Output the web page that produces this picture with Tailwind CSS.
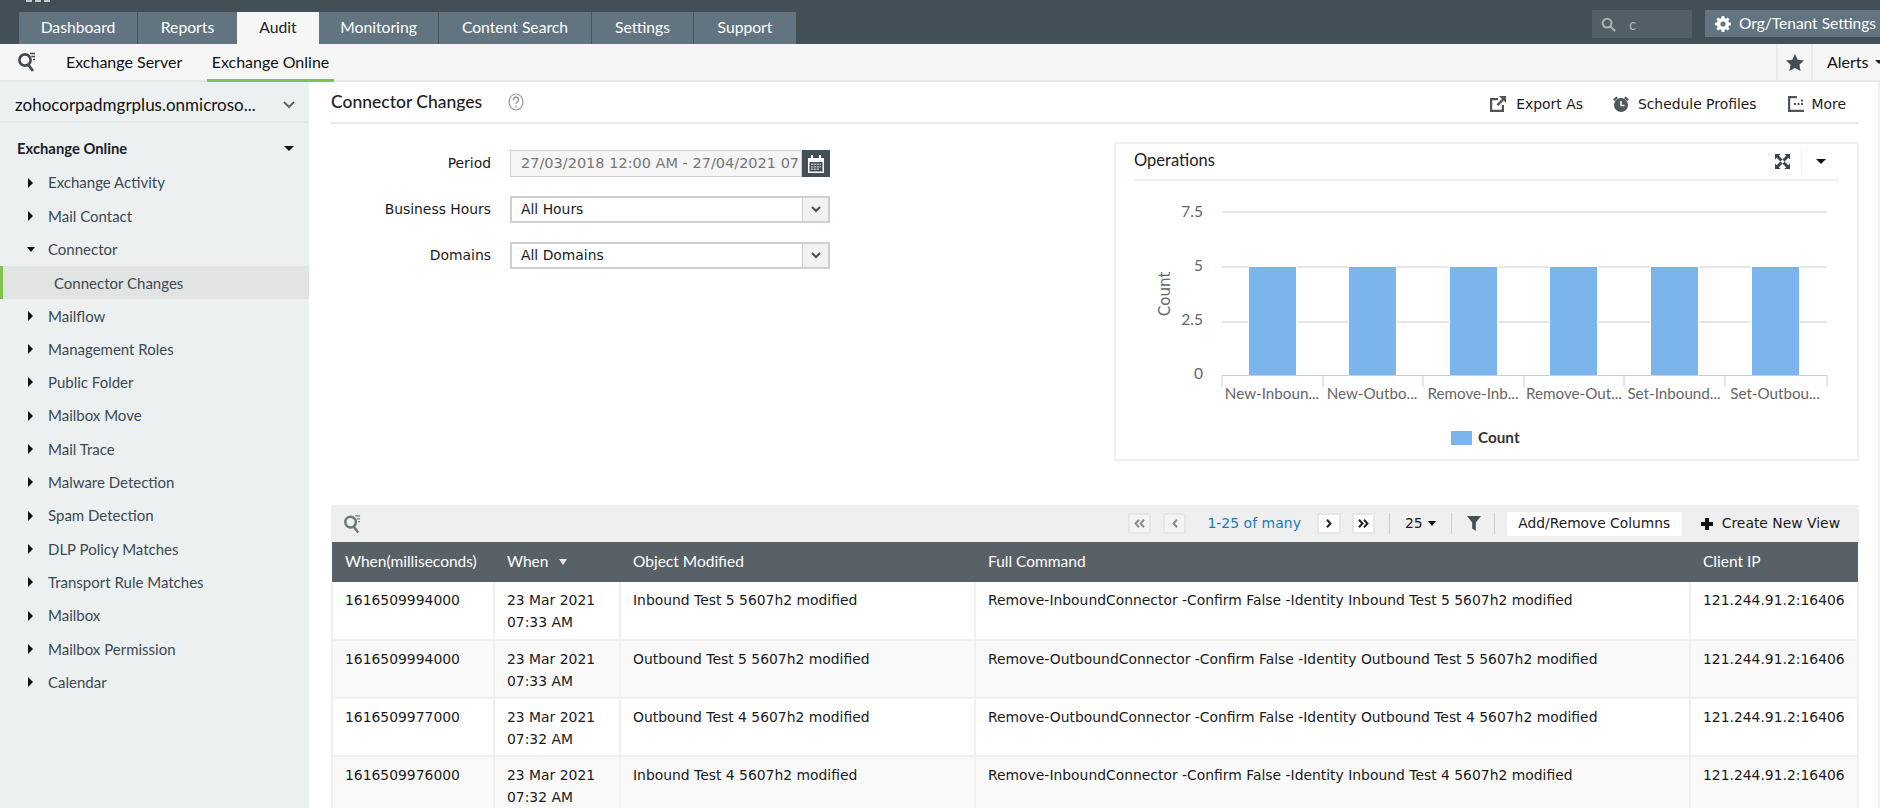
<!DOCTYPE html>
<html lang="en">
<head>
    <meta charset="UTF-8">
    <title>Connector Changes - Exchange Online</title>
    <script src="https://cdn.jsdelivr.net/npm/@tailwindcss/browser@4"></script>
</head>
<body class="bg-white font-['Lato',sans-serif] overflow-hidden">
<div class="flex flex-col h-[808px] w-[1880px] overflow-hidden">
    <!-- Top bar -->
    <header class="relative flex items-start h-[44px] bg-[#434f57] shrink-0">
        <div class="absolute left-[26px] top-0 flex gap-[3px]">
            <span class="w-[6px] h-[2px] bg-[#c4c9cc]"></span><span class="w-[6px] h-[2px] bg-[#c4c9cc]"></span><span class="w-[6px] h-[2px] bg-[#c4c9cc]"></span>
        </div>
        <nav class="flex ml-[19px] mt-[12px] h-[32px] text-[15.700px] text-white">
            <a class="w-[119px] flex items-center justify-center bg-[#61747f] border-r border-[#4a565e]">Dashboard</a>
            <a class="w-[99px] flex items-center justify-center bg-[#61747f]">Reports</a>
            <a class="w-[82px] flex items-center justify-center bg-[#f6f6f6] text-[#222]">Audit</a>
            <a class="w-[120px] flex items-center justify-center bg-[#61747f] border-r border-[#4a565e]">Monitoring</a>
            <a class="w-[153px] flex items-center justify-center bg-[#61747f] border-r border-[#4a565e]">Content Search</a>
            <a class="w-[102px] flex items-center justify-center bg-[#61747f] border-r border-[#4a565e]">Settings</a>
            <a class="w-[102px] flex items-center justify-center bg-[#61747f]">Support</a>
        </nav>
        <div class="ml-auto flex items-center w-[100px] h-[28px] mt-[10px] bg-[#535f67] text-[#aab2b7] text-[15px] pl-[9px] gap-[13px]">
            <svg class="w-[15px] h-[15px]" viewBox="0 0 16 16" fill="none" stroke="#aab2b7" stroke-width="2.200"><circle cx="6.500" cy="6.500" r="4.700"/><path d="M10 10l5 5"/></svg>
            <span>c</span>
        </div>
        <div class="flex items-center w-[175px] h-[27px] mt-[10px] ml-[13px] bg-[#61747f] text-white text-[15.500px] pl-[10px] gap-[8px] whitespace-nowrap overflow-hidden">
            <svg class="w-[16px] h-[16px] shrink-0" viewBox="0 0 16 16" fill="#fff"><path fill-rule="evenodd" d="M6.700 0h2.600l.4 2.200 1.200.5L12.800 1.400l1.800 1.800-1.300 1.900.5 1.200 2.200.4v2.600l-2.200.4-.5 1.200 1.300 1.900-1.800 1.800-1.900-1.300-1.200.5-.4 2.200H6.700l-.4-2.200-1.200-.5-1.900 1.300-1.800-1.800 1.300-1.900-.5-1.200L0 9.300V6.700l2.200-.4.500-1.200L1.400 3.200l1.800-1.800 1.900 1.300 1.200-.5zM8 5.400a2.600 2.600 0 100 5.200 2.600 2.600 0 000-5.200z"/></svg>
            <span>Org/Tenant Settings</span>
        </div>
    </header>

    <!-- Sub navigation -->
    <div class="flex items-stretch h-[38px] bg-[#f6f6f6] border-b-2 border-[#e6e8e8] shrink-0 text-[16px] text-[#111]">
        <div class="flex items-center pl-[17px] w-[66px]">
            <svg class="w-[19px] h-[22px]" viewBox="0 0 19 22" fill="none" stroke="#3f4a50" stroke-width="2.600"><circle cx="8" cy="9" r="5.600"/><path d="M11.500 14l4.500 6"/><path d="M13 2.500h5M14.500 5.500h3.500M16 8.500h2" stroke-width="1.300"/></svg>
        </div>
        <a class="flex items-center w-[141px]">Exchange Server</a>
        <a class="flex items-center justify-center w-[127px] h-[38px] border-b-[3px] border-[#7fc24d] whitespace-nowrap">Exchange Online</a>
        <div class="ml-auto flex items-center justify-center w-[37px] h-[36px] border-x-2 border-[#eaeaea]">
            <svg class="w-[18px] h-[17px]" viewBox="0 0 18 17" fill="#434f57"><path d="M9 0l2.700 5.700 6.300.8-4.600 4.300 1.200 6.200L9 14l-5.600 3 1.200-6.200L0 6.500l6.300-.8z"/></svg>
        </div>
        <div class="flex items-center w-[67px] pl-[14px] whitespace-nowrap overflow-hidden">Alerts
            <span class="ml-[6px] w-0 h-0 border-x-[4px] border-x-transparent border-t-[4px] border-t-[#222]"></span>
        </div>
    </div>

    <div class="flex flex-1 min-h-0">
        <!-- Sidebar -->
        <aside class="w-[309px] shrink-0 bg-[#ecf0f1] text-[15px] text-[#3d4950]">
            <div class="flex items-center justify-between h-[41px] pt-[6px] pl-[15px] pr-[14px] border-b-2 border-[#e6e9ea] text-[17px] text-[#111]">
                <span>zohocorpadmgrplus.onmicroso...</span>
                <svg class="w-[12px] h-[8px]" viewBox="0 0 12 8" fill="none" stroke="#5d676d" stroke-width="2"><path d="M1 1l5 5 5-5"/></svg>
            </div>
            <div class="flex items-center justify-between h-[35px] mt-[8px] pl-[17px] pr-[15px] font-bold text-[14.800px] text-[#1c2226]">
                <span>Exchange Online</span>
                <span class="w-0 h-0 border-x-[5px] border-x-transparent border-t-[5px] border-t-[#111]"></span>
            </div>
            <ul>
                <li class="flex items-center h-[33.300px] pl-[28px] gap-[15px]"><span class="w-0 h-0 border-y-[5px] border-y-transparent border-l-[5px] border-l-[#111]"></span>Exchange Activity</li>
                <li class="flex items-center h-[33.300px] pl-[28px] gap-[15px]"><span class="w-0 h-0 border-y-[5px] border-y-transparent border-l-[5px] border-l-[#111]"></span>Mail Contact</li>
                <li class="flex items-center h-[33.300px] pl-[27px] gap-[13px]"><span class="w-0 h-0 border-x-[4.500px] border-x-transparent border-t-[5px] border-t-[#111]"></span>Connector</li>
                <li class="flex items-center h-[33.300px] pl-[51px] pt-[2px] border-l-[3px] border-[#7fc24d] bg-[#e2e4e4]">Connector Changes</li>
                <li class="flex items-center h-[33.300px] pl-[28px] gap-[15px]"><span class="w-0 h-0 border-y-[5px] border-y-transparent border-l-[5px] border-l-[#111]"></span>Mailflow</li>
                <li class="flex items-center h-[33.300px] pl-[28px] gap-[15px]"><span class="w-0 h-0 border-y-[5px] border-y-transparent border-l-[5px] border-l-[#111]"></span>Management Roles</li>
                <li class="flex items-center h-[33.300px] pl-[28px] gap-[15px]"><span class="w-0 h-0 border-y-[5px] border-y-transparent border-l-[5px] border-l-[#111]"></span>Public Folder</li>
                <li class="flex items-center h-[33.300px] pl-[28px] gap-[15px]"><span class="w-0 h-0 border-y-[5px] border-y-transparent border-l-[5px] border-l-[#111]"></span>Mailbox Move</li>
                <li class="flex items-center h-[33.300px] pl-[28px] gap-[15px]"><span class="w-0 h-0 border-y-[5px] border-y-transparent border-l-[5px] border-l-[#111]"></span>Mail Trace</li>
                <li class="flex items-center h-[33.300px] pl-[28px] gap-[15px]"><span class="w-0 h-0 border-y-[5px] border-y-transparent border-l-[5px] border-l-[#111]"></span>Malware Detection</li>
                <li class="flex items-center h-[33.300px] pl-[28px] gap-[15px]"><span class="w-0 h-0 border-y-[5px] border-y-transparent border-l-[5px] border-l-[#111]"></span>Spam Detection</li>
                <li class="flex items-center h-[33.300px] pl-[28px] gap-[15px]"><span class="w-0 h-0 border-y-[5px] border-y-transparent border-l-[5px] border-l-[#111]"></span>DLP Policy Matches</li>
                <li class="flex items-center h-[33.300px] pl-[28px] gap-[15px]"><span class="w-0 h-0 border-y-[5px] border-y-transparent border-l-[5px] border-l-[#111]"></span>Transport Rule Matches</li>
                <li class="flex items-center h-[33.300px] pl-[28px] gap-[15px]"><span class="w-0 h-0 border-y-[5px] border-y-transparent border-l-[5px] border-l-[#111]"></span>Mailbox</li>
                <li class="flex items-center h-[33.300px] pl-[28px] gap-[15px]"><span class="w-0 h-0 border-y-[5px] border-y-transparent border-l-[5px] border-l-[#111]"></span>Mailbox Permission</li>
                <li class="flex items-center h-[33.300px] pl-[28px] gap-[15px]"><span class="w-0 h-0 border-y-[5px] border-y-transparent border-l-[5px] border-l-[#111]"></span>Calendar</li>
            </ul>
        </aside>

        <!-- Main -->
        <main class="flex-1 min-w-0 pl-[22px] pr-[19px] border-r-2 border-[#f0f0f0] font-['DejaVu_Sans',sans-serif] text-[13.900px] text-[#1a1a1a]">
            <div class="flex items-center h-[42px] border-b-2 border-[#e8e8e8]">
                <h1 class="font-['Lato',sans-serif] font-medium text-[17.500px] text-[#222]">Connector Changes</h1>
                <svg class="ml-[26px] w-[16px] h-[18px]" viewBox="0 0 16 18" fill="none" stroke="#9a9a9a" stroke-width="1.200"><ellipse cx="8" cy="9" rx="7" ry="8"/><path d="M5.500 7c0-4 5-4 5 0 0 2-2.500 2-2.500 4" stroke-width="1.500"/><path d="M8 12.500v2" stroke-width="1.500"/></svg>
                <div class="ml-auto flex items-center pr-[13px] pt-[4px]">
                    <svg class="w-[16px] h-[16px] mr-[10px]" viewBox="0 0 16 16" fill="#4c565c"><path d="M0 2h8v2.200H2.200v9.600h9.600V9H14v7H0z"/><path d="M9 0h7v7l-2.400-2.400-5.300 5.300-1.700-1.700 5.300-5.300z"/></svg>
                    <span>Export As</span>
                    <svg class="ml-[29px] mr-[8px] w-[18px] h-[18px]" viewBox="0 0 18 18" fill="#4c565c"><circle cx="9" cy="10" r="7"/><path d="M1 4.500L4.500 1.500 6 3 2.500 6zM17 4.500l-3.500-3L12 3l3.500 3z"/><path d="M9 6v4.500h3.500" fill="none" stroke="#fff" stroke-width="1.500"/></svg>
                    <span>Schedule Profiles</span>
                    <svg class="ml-[31px] mr-[7px] w-[17px] h-[16px]" viewBox="0 0 17 16" fill="#4c565c"><path d="M0 0h9v2.200H2.200v11.600H16V16H0z"/><path d="M6 7h2v2H6zM9.500 7h2v2h-2zM13 7h2v2h-2zM13 3.500h2v2h-2z"/></svg>
                    <span>More</span>
                </div>
            </div>

            <div class="flex items-start justify-between h-[381px]">
                <!-- Filter form -->
                <div class="w-[499px] pt-[26px] flex flex-col gap-[19px]">
                    <div class="flex items-center h-[27px]">
                        <label class="w-[160px] text-right">Period</label>
                        <div class="ml-[19px] flex-1 flex h-[27px]">
                            <div class="flex-1 flex items-center pl-[10px] bg-[#f5f5f5] border border-[#cfcfcf] text-[#777] text-[14.500px] whitespace-nowrap overflow-hidden">27/03/2018 12:00 AM - 27/04/2021 07</div>
                            <div class="w-[28px] flex items-center justify-center bg-[#434f57] shrink-0">
                                <svg class="w-[18px] h-[18px]" viewBox="0 0 18 18" fill="#fff"><path d="M1 3h3V0h2v3h6V0h2v3h3v15H1zM2.500 7v9.500h13V7z"/><path d="M4 8.500h2.500v1.500H4zM7 8.500h2v1.500H7zM9.500 8.500H12v1.500H9.500zM12.500 8.500H14v1.500h-1.500zM4 11h2.500v1.500H4zM7 11h2v1.500H7zM9.500 11H12v1.500H9.500zM12.500 11H14v1.500h-1.500zM4 13.500h2.500V15H4zM7 13.500h2V15H7zM9.500 13.500H12V15H9.500z" fill="#aeb5b9"/></svg>
                            </div>
                        </div>
                    </div>
                    <div class="flex items-center h-[27px]">
                        <label class="w-[160px] text-right">Business Hours</label>
                        <div class="ml-[19px] flex-1 flex h-[27px] border-2 border-[#cfcfcf]">
                            <div class="flex-1 flex items-center pl-[9px] bg-white">All Hours</div>
                            <div class="w-[26px] flex items-center justify-center bg-[#f2f2f2] border-l border-[#cfcfcf]">
                                <svg class="w-[10px] h-[7px]" viewBox="0 0 10 7" fill="none" stroke="#434f57" stroke-width="2"><path d="M1 1l4 4 4-4"/></svg>
                            </div>
                        </div>
                    </div>
                    <div class="flex items-center h-[27px]">
                        <label class="w-[160px] text-right">Domains</label>
                        <div class="ml-[19px] flex-1 flex h-[27px] border-2 border-[#cfcfcf]">
                            <div class="flex-1 flex items-center pl-[9px] bg-white">All Domains</div>
                            <div class="w-[26px] flex items-center justify-center bg-[#f2f2f2] border-l border-[#cfcfcf]">
                                <svg class="w-[10px] h-[7px]" viewBox="0 0 10 7" fill="none" stroke="#434f57" stroke-width="2"><path d="M1 1l4 4 4-4"/></svg>
                            </div>
                        </div>
                    </div>
                </div>

                <!-- Operations chart -->
                <section class="w-[745px] h-[319px] mt-[18px] border-2 border-[#f0f0f0] px-[18px]">
                    <div class="flex items-center h-[37px] border-b-2 border-[#f0f0f0]">
                        <h2 class="font-['Lato',sans-serif] text-[16.500px] text-[#222] pb-[2px]">Operations</h2>
                        <svg class="ml-auto w-[15px] h-[15px]" viewBox="0 0 15 15" fill="#3a4449"><path d="M0 0h5.500L3.800 1.700 7.500 5.400 5.400 7.500 1.700 3.800 0 5.500zM15 0v5.500l-1.700-1.700-3.700 3.700-2.100-2.100 3.700-3.700L9.500 0zM0 15V9.500l1.700 1.700 3.700-3.700 2.100 2.100-3.700 3.700L5.500 15zM15 15H9.500l1.700-1.700-3.700-3.700 2.100-2.100 3.700 3.700L15 9.500z"/></svg>
                        <span class="ml-[11px] w-px h-[26px] bg-[#eeeeee]"></span>
                        <span class="ml-[14px] mr-[13px] w-0 h-0 border-x-[5px] border-x-transparent border-t-[5px] border-t-[#111]"></span>
                    </div>
                    <svg class="block -ml-[18px]" width="741" height="278" viewBox="1116 181 741 278" font-family="Lato, sans-serif" font-size="15.500" fill="#666">
                        <g stroke="#e6e6e6" stroke-width="2">
                            <path d="M1222 212H1827M1222 267H1827M1222 322H1827"/>
                        </g>
                        <g fill="#7cb5ec" stroke="#fff" stroke-width="1">
                            <rect x="1248.500" y="266.500" width="48" height="109"/>
                            <rect x="1348.500" y="266.500" width="48" height="109"/>
                            <rect x="1449.500" y="266.500" width="48" height="109"/>
                            <rect x="1549.500" y="266.500" width="48" height="109"/>
                            <rect x="1650.500" y="266.500" width="48" height="109"/>
                            <rect x="1751.500" y="266.500" width="48" height="109"/>
                        </g>
                        <path d="M1222 387V375.500H1827V387M1323 375.500V387M1423 375.500V387M1524 375.500V387M1624 375.500V387M1725 375.500V387" fill="none" stroke="#c0d0e0"/>
                        <g text-anchor="end">
                            <text x="1203" y="217">7.5</text>
                            <text x="1203" y="271">5</text>
                            <text x="1203" y="325">2.5</text>
                            <text x="1203" y="379">0</text>
                        </g>
                        <text transform="translate(1170 294) rotate(-90)" text-anchor="middle" font-family="DejaVu Sans, sans-serif" font-size="15">Count</text>
                        <g font-size="15.200" text-anchor="middle">
                            <text x="1272" y="399">New-Inboun...</text>
                            <text x="1372" y="399">New-Outbo...</text>
                            <text x="1473" y="399">Remove-Inb...</text>
                            <text x="1574" y="399">Remove-Out...</text>
                            <text x="1674" y="399">Set-Inbound...</text>
                            <text x="1775" y="399">Set-Outbou...</text>
                        </g>
                        <rect x="1451" y="431" width="21" height="14" fill="#7cb5ec"/>
                        <text x="1478" y="443" font-size="15.300" font-weight="700" fill="#333">Count</text>
                    </svg>
                </section>
            </div>

            <!-- Table toolbar -->
            <div class="flex items-center h-[37px] bg-[#efefef]">
                <svg class="ml-[12px] w-[18px] h-[22px]" viewBox="0 0 19 22" fill="none" stroke="#6f777b" stroke-width="2.600"><circle cx="8" cy="9" r="5.600"/><path d="M11.500 14l4.500 6"/><path d="M13 2.500h5M14.500 5.500h3.500M16 8.500h2" stroke-width="1.300"/></svg>
                <div class="ml-auto flex items-center">
                    <button class="flex items-center justify-center w-[23px] h-[21px] bg-[#f3f3f3] border-2 border-[#e6e6e6]">
                        <svg class="w-[11px] h-[9px]" viewBox="0 0 11 9" fill="none" stroke="#8a8a8a" stroke-width="2"><path d="M5 .7L1.500 4.500 5 8.300M10 .7L6.500 4.500 10 8.300"/></svg>
                    </button>
                    <button class="ml-[12px] flex items-center justify-center w-[23px] h-[21px] bg-[#f3f3f3] border-2 border-[#e6e6e6]">
                        <svg class="w-[6px] h-[9px]" viewBox="0 0 6 9" fill="none" stroke="#8a8a8a" stroke-width="2"><path d="M5 .7L1.500 4.500 5 8.300"/></svg>
                    </button>
                    <span class="ml-[21px] text-[#1b7cb8] text-[14px] whitespace-nowrap">1-25 of many</span>
                    <button class="ml-[16px] flex items-center justify-center w-[24px] h-[21px] bg-white border-2 border-[#e6e6e6]">
                        <svg class="w-[6px] h-[9px]" viewBox="0 0 6 9" fill="none" stroke="#222" stroke-width="2"><path d="M1 .7l3.500 3.800L1 8.300"/></svg>
                    </button>
                    <button class="ml-[11px] flex items-center justify-center w-[23px] h-[21px] bg-white border-2 border-[#e6e6e6]">
                        <svg class="w-[11px] h-[9px]" viewBox="0 0 11 9" fill="none" stroke="#222" stroke-width="2"><path d="M1 .7l3.500 3.800L1 8.300M6 .7l3.500 3.800L6 8.300"/></svg>
                    </button>
                    <span class="ml-[14px] w-px h-[21px] bg-[#cfcfcf]"></span>
                    <span class="ml-[15px] text-[14px]">25</span>
                    <span class="ml-[5px] w-0 h-0 border-x-[4.500px] border-x-transparent border-t-[5px] border-t-[#111]"></span>
                    <span class="ml-[15px] w-px h-[21px] bg-[#cfcfcf]"></span>
                    <svg class="ml-[15px] w-[14px] h-[15px]" viewBox="0 0 14 15" fill="#434f57"><path d="M0 0h14L8.800 6.500V15l-3.600-2.500v-6z"/></svg>
                    <span class="ml-[13px] w-px h-[21px] bg-[#cfcfcf]"></span>
                    <button class="ml-[12px] w-[175px] h-[24px] bg-white text-[13.800px] whitespace-nowrap">Add/Remove Columns</button>
                    <svg class="ml-[19px] w-[12px] h-[12px]" viewBox="0 0 12 12" fill="#111"><path d="M4 0h4v4h4v4H8v4H4V8H0V4h4z"/></svg>
                    <span class="ml-[9px] mr-[19px] whitespace-nowrap">Create New View</span>
                </div>
            </div>

            <!-- Report table -->
            <table class="w-full table-fixed border-collapse">
                <colgroup>
                    <col class="w-[162px]"><col class="w-[126px]"><col class="w-[355px]"><col class="w-[715px]"><col>
                </colgroup>
                <thead>
                    <tr class="h-[40px] bg-[#586167] text-white text-left">
                        <th class="px-[13px] font-normal font-['Lato',sans-serif] text-[15.500px] whitespace-nowrap">When(milliseconds)</th>
                        <th class="px-[13px] font-normal font-['Lato',sans-serif] text-[15.500px]"><span class="inline-flex items-center gap-[11px]">When <span class="w-0 h-0 border-x-[4.500px] border-x-transparent border-t-[6px] border-t-[#e8e8e8]"></span></span></th>
                        <th class="px-[13px] font-normal font-['Lato',sans-serif] text-[15.500px]">Object Modified</th>
                        <th class="px-[13px] font-normal font-['Lato',sans-serif] text-[15.500px]">Full Command</th>
                        <th class="px-[13px] font-normal font-['Lato',sans-serif] text-[15.500px]">Client IP</th>
                    </tr>
                </thead>
                <tbody class="leading-[22px] align-top">
                    <tr class="h-[58px] border-b-2 border-[#f0f0f0]">
                        <td class="pl-[12px] pr-0 pt-[7px] border-x-2 border-[#f0f0f0]">1616509994000</td>
                        <td class="pl-[12px] pr-0 pt-[7px] border-x-2 border-[#f0f0f0]">23 Mar 2021<br>07:33 AM</td>
                        <td class="pl-[12px] pr-0 pt-[7px] border-x-2 border-[#f0f0f0]">Inbound Test 5 5607h2 modified</td>
                        <td class="pl-[12px] pr-0 pt-[7px] border-x-2 border-[#f0f0f0]">Remove-InboundConnector -Confirm False -Identity Inbound Test 5 5607h2 modified</td>
                        <td class="pl-[12px] pr-0 pt-[7px] border-x-2 border-[#f0f0f0] whitespace-nowrap">121.244.91.2:16406</td>
                    </tr>
                    <tr class="h-[58px] bg-[#f9f9f9] border-b-2 border-[#f0f0f0]">
                        <td class="pl-[12px] pr-0 pt-[7px] border-x-2 border-[#f0f0f0]">1616509994000</td>
                        <td class="pl-[12px] pr-0 pt-[7px] border-x-2 border-[#f0f0f0]">23 Mar 2021<br>07:33 AM</td>
                        <td class="pl-[12px] pr-0 pt-[7px] border-x-2 border-[#f0f0f0]">Outbound Test 5 5607h2 modified</td>
                        <td class="pl-[12px] pr-0 pt-[7px] border-x-2 border-[#f0f0f0]">Remove-OutboundConnector -Confirm False -Identity Outbound Test 5 5607h2 modified</td>
                        <td class="pl-[12px] pr-0 pt-[7px] border-x-2 border-[#f0f0f0] whitespace-nowrap">121.244.91.2:16406</td>
                    </tr>
                    <tr class="h-[58px] border-b-2 border-[#f0f0f0]">
                        <td class="pl-[12px] pr-0 pt-[7px] border-x-2 border-[#f0f0f0]">1616509977000</td>
                        <td class="pl-[12px] pr-0 pt-[7px] border-x-2 border-[#f0f0f0]">23 Mar 2021<br>07:32 AM</td>
                        <td class="pl-[12px] pr-0 pt-[7px] border-x-2 border-[#f0f0f0]">Outbound Test 4 5607h2 modified</td>
                        <td class="pl-[12px] pr-0 pt-[7px] border-x-2 border-[#f0f0f0]">Remove-OutboundConnector -Confirm False -Identity Outbound Test 4 5607h2 modified</td>
                        <td class="pl-[12px] pr-0 pt-[7px] border-x-2 border-[#f0f0f0] whitespace-nowrap">121.244.91.2:16406</td>
                    </tr>
                    <tr class="h-[58px] bg-[#f9f9f9] border-b-2 border-[#f0f0f0]">
                        <td class="pl-[12px] pr-0 pt-[7px] border-x-2 border-[#f0f0f0]">1616509976000</td>
                        <td class="pl-[12px] pr-0 pt-[7px] border-x-2 border-[#f0f0f0]">23 Mar 2021<br>07:32 AM</td>
                        <td class="pl-[12px] pr-0 pt-[7px] border-x-2 border-[#f0f0f0]">Inbound Test 4 5607h2 modified</td>
                        <td class="pl-[12px] pr-0 pt-[7px] border-x-2 border-[#f0f0f0]">Remove-InboundConnector -Confirm False -Identity Inbound Test 4 5607h2 modified</td>
                        <td class="pl-[12px] pr-0 pt-[7px] border-x-2 border-[#f0f0f0] whitespace-nowrap">121.244.91.2:16406</td>
                    </tr>
                </tbody>
            </table>
        </main>
    </div>
</div>
</body>
</html>
